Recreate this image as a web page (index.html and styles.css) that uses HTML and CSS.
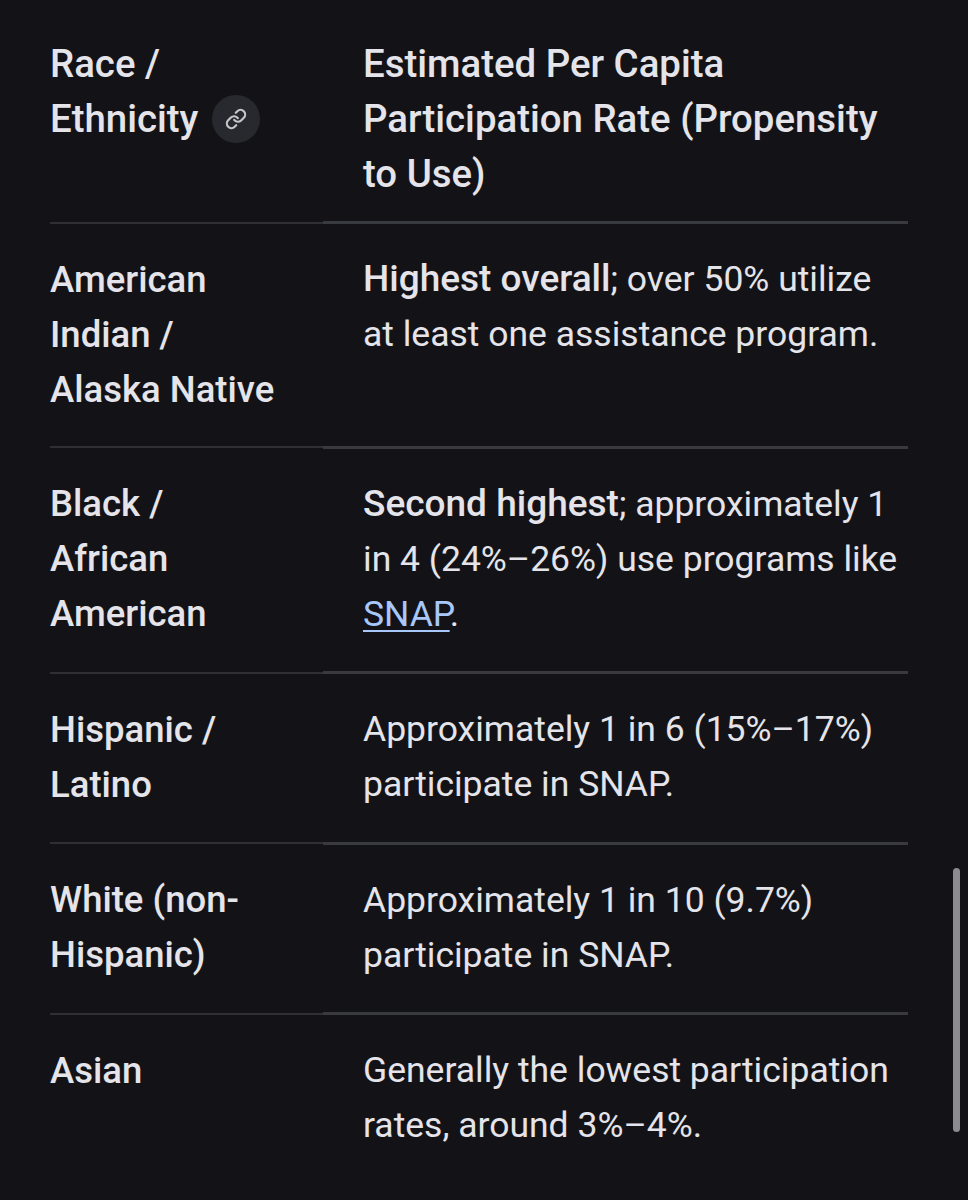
FILE: index.html
```html
<!DOCTYPE html>
<html lang="en">
<head>
<meta charset="utf-8">
<title>Participation by Race / Ethnicity</title>
<link rel="stylesheet" href="styles.css">
</head>
<body>
<main class="page">
  <table class="data-table">
    <thead>
      <tr>
        <th class="col-a">Race / Ethnicity <span class="link-btn"><svg viewBox="0 0 24 24" width="22" height="22" fill="none" stroke="currentColor" stroke-width="2.4" stroke-linecap="round" stroke-linejoin="round"><path d="M10 13a5 5 0 0 0 7.54.54l3-3a5 5 0 0 0-7.07-7.07l-1.72 1.71"/><path d="M14 11a5 5 0 0 0-7.54-.54l-3 3a5 5 0 0 0 7.07 7.07l1.71-1.71"/></svg></span></th>
        <th class="col-b">Estimated Per Capita Participation Rate (Propensity to Use)</th>
      </tr>
    </thead>
    <tbody>
      <tr>
        <td class="col-a strong">American Indian / Alaska Native</td>
        <td class="col-b"><b>Highest overall</b>; over 50% utilize at least one assistance program.</td>
      </tr>
      <tr>
        <td class="col-a strong">Black / African American</td>
        <td class="col-b"><b>Second highest</b>; approximately 1 in 4 (24%–26%) use programs like <a href="#" class="link">SNAP</a>.</td>
      </tr>
      <tr>
        <td class="col-a strong">Hispanic / Latino</td>
        <td class="col-b">Approximately 1 in 6 (15%–17%) participate in SNAP.</td>
      </tr>
      <tr>
        <td class="col-a strong">White (non-Hispanic)</td>
        <td class="col-b">Approximately 1 in 10 (9.7%) participate in SNAP.</td>
      </tr>
      <tr>
        <td class="col-a strong">Asian</td>
        <td class="col-b">Generally the lowest participation rates, around 3%–4%.</td>
      </tr>
    </tbody>
  </table>
  <div class="scrollbar"></div>
</main>
</body>
</html>
```
FILE: styles.css
```css
html, body {
  margin: 0;
  padding: 0;
  background: #131317;
}
body {
  font-family: Roboto, "Liberation Sans", sans-serif;
  font-size: 35.5px;
  line-height: 55px;
  color: #e4e4ea;
}
.page {
  position: relative;
  height: 1200px;
  padding: 16px 60px 0 50px;
  box-sizing: border-box;
}
.data-table {
  width: 858px;
  border-collapse: collapse;
  table-layout: fixed;
}
.col-a {
  width: 273px;
  padding-left: 0;
  padding-right: 40px;
  border-bottom: 2px solid #2f3035;
}
.col-b {
  padding-left: 40px;
  padding-right: 0;
  border-bottom: 3px solid #393a3f;
}
th, td {
  text-align: left;
  vertical-align: top;
  box-sizing: border-box;
}
th {
  font-weight: 500;
  font-size: 38.4px;
  padding-top: 20px;
  padding-bottom: 20px;
}
td {
  font-weight: 400;
  padding-top: 28px;
  padding-bottom: 29.5px;
}
tbody tr:last-child td {
  border-bottom: none;
}
td.strong {
  font-weight: 500;
  font-size: 36.5px;
}
b {
  font-weight: 500;
  font-size: 37px;
  line-height: 1;
}
.link-btn {
  display: inline-flex;
  align-items: center;
  justify-content: center;
  width: 48px;
  height: 48px;
  border-radius: 50%;
  background: #28292e;
  color: #c4c6cc;
  vertical-align: middle;
  margin-left: 4px;
  margin-top: -6px;
}
.link {
  color: #a8c7fa;
  text-decoration: underline;
  text-underline-offset: 4px;
  text-decoration-thickness: 2px;
}
.scrollbar {
  position: absolute;
  left: 953px;
  top: 868px;
  width: 7px;
  height: 264px;
  border-radius: 4px;
  background: #8b8b90;
}
```
